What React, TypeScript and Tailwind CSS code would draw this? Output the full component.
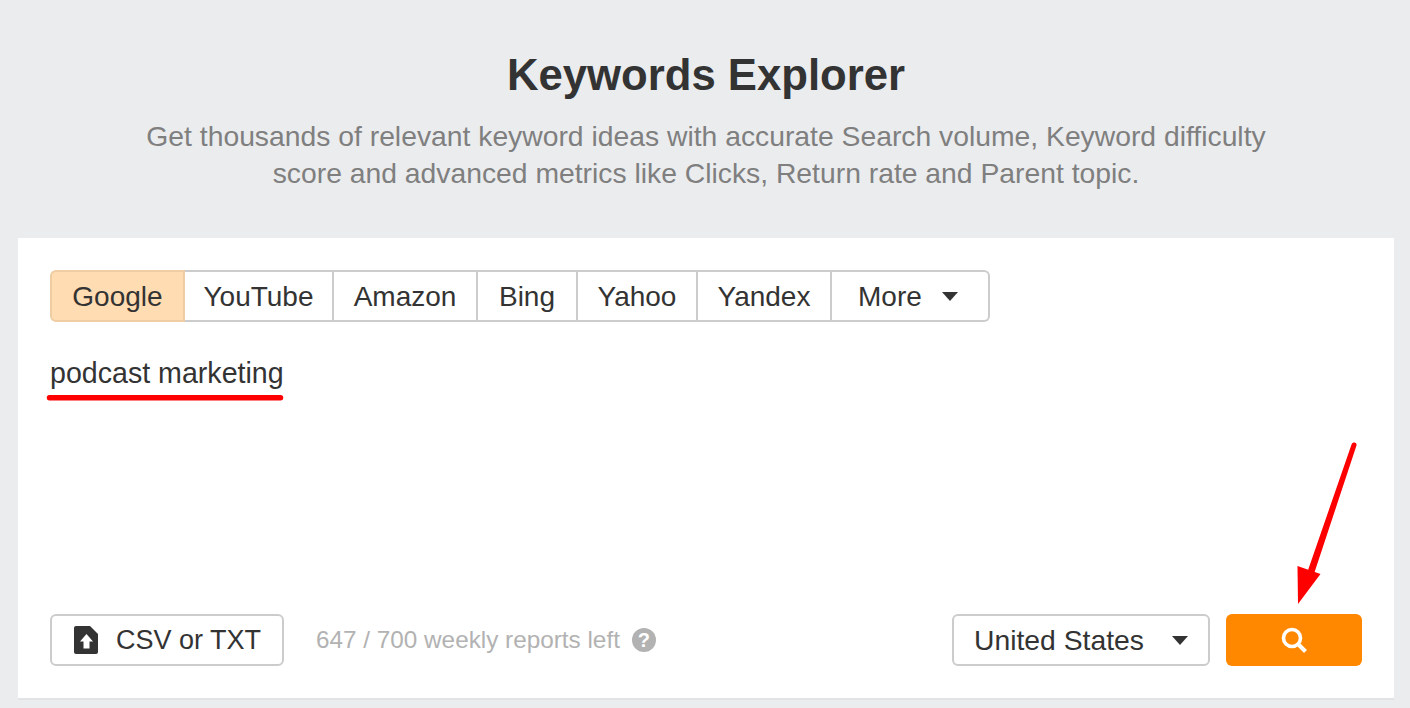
const tabs = [
  { label: "YouTube", width: "w-[149px]" },
  { label: "Amazon", width: "w-[144px]" },
  { label: "Bing", width: "w-[100px]" },
  { label: "Yahoo", width: "w-[120px]" },
  { label: "Yandex", width: "w-[134px]" },
];

function Caret() {
  return <span className="inline-block border-x-[8px] border-t-[9px] border-x-transparent border-t-[#333]" />;
}

function FileUpload() {
  return (
    <svg width="24" height="30" viewBox="0 0 24 30">
      <path d="M2 1h14l8 8v18a2 2 0 0 1-2 2H2a2 2 0 0 1-2-2V3a2 2 0 0 1 2-2z" fill="#333" />
      <path d="M12.5 9l6.5 7.5h-3.5v7h-6v-7H6z" fill="#fff" />
    </svg>
  );
}

function SearchIcon() {
  return (
    <svg width="26" height="26" viewBox="0 0 26 26" fill="none" stroke="#fff">
      <circle cx="11" cy="11" r="8.5" strokeWidth="3.6" />
      <path d="M17.5 17.5L24.5 24.5" strokeWidth="4" />
    </svg>
  );
}

export default function App() {
  return (
    <div className="relative h-[708px] w-[1410px] overflow-hidden bg-[#ebecee] font-['Liberation_Sans',Arial,sans-serif] text-[#333]">
      <div className="pt-[47px] pl-[2px] text-center">
        <h1 className="text-[43.7px] leading-[56px] font-bold">Keywords Explorer</h1>
        <p className="mt-[15px] text-[28.3px] leading-[37px] text-[#7f7f7f]">
          Get thousands of relevant keyword ideas with accurate Search volume, Keyword difficulty
          <br />
          score and advanced metrics like Clicks, Return rate and Parent topic.
        </p>
      </div>

      <div className="mt-[46px] mr-[16px] ml-[18px] flex h-[462px] flex-col border-b-2 border-[#e2e3e5] bg-white px-[32px] pt-[32px] pb-[32px]">
        <div className="flex h-[52px] w-fit text-[28px]">
          <div className="flex w-[135px] items-center justify-center rounded-l-[6px] border-2 border-[#eecda3] bg-[#ffdcb2] pt-[2px]">
            Google
          </div>
          {tabs.map((tab) => (
            <div
              key={tab.label}
              className={"flex items-center justify-center border-y-2 border-r-2 border-[#ccc] pt-[2px] " + tab.width}
            >
              {tab.label}
            </div>
          ))}
          <div className="flex w-[158px] items-center gap-[20px] rounded-r-[6px] border-y-2 border-r-2 border-[#ccc] pl-[26px]">
            <span className="pt-[2px]">More</span>
            <Caret />
          </div>
        </div>

        <div className="mt-[34px] text-[28.6px] leading-[34px]">podcast marketing</div>

        <div className="mt-auto flex items-center">
          <div className="flex h-[52px] w-[234px] items-center gap-[18px] rounded-[6px] border-2 border-[#ccc] pl-[22px] text-[27px]">
            <FileUpload />
            CSV or TXT
          </div>
          <span className="ml-[32px] text-[24.3px] text-[#b2b2b2]">647 / 700 weekly reports left</span>
          <span className="ml-[12px] flex h-[24px] w-[24px] items-center justify-center rounded-full bg-[#b2b2b2] text-[20px] font-bold text-white">
            ?
          </span>
          <div className="ml-auto flex h-[52px] w-[258px] items-center gap-[28px] rounded-[6px] border-2 border-[#ccc] pl-[20px] text-[28.3px]">
            United States
            <Caret />
          </div>
          <div className="ml-[16px] flex h-[52px] w-[136px] items-center justify-center rounded-[6px] bg-[#ff8800]">
            <SearchIcon />
          </div>
        </div>
      </div>

      {/* red annotations drawn over the form */}
      <svg className="absolute top-0 left-0" width="1410" height="708" viewBox="0 0 1410 708">
        <line x1="49.5" y1="397.7" x2="280.5" y2="397.7" stroke="#fe0000" strokeWidth="5.5" strokeLinecap="round" />
        <path d="M1351.6 444.2a2.5 2.5 0 0 1 4.8 1.6L1313.3 576L1306.7 574z" fill="#fe0000" />
        <path d="M1298 604l-0.5-38 23 8z" fill="#fe0000" />
      </svg>
    </div>
  );
}
